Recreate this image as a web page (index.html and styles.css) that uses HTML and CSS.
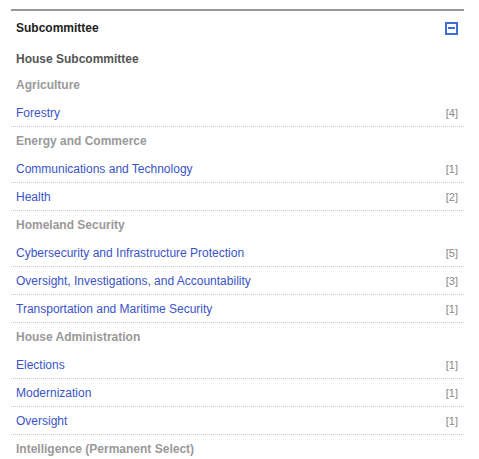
FILE: index.html
```html
<!DOCTYPE html>
<html>
<head>
<meta charset="utf-8">
<link rel="stylesheet" href="styles.css">
</head>
<body>
<div class="panel">
  <div class="panel-head">
    <span class="panel-title">Subcommittee</span>
    <span class="toggle" aria-label="collapse"></span>
  </div>
  <div class="chamber">House Subcommittee</div>
  <ul class="list">
    <li class="group">Agriculture</li>
    <li class="item"><a href="#">Forestry</a><span class="count">[4]</span></li>
    <li class="group">Energy and Commerce</li>
    <li class="item"><a href="#">Communications and Technology</a><span class="count">[1]</span></li>
    <li class="item"><a href="#">Health</a><span class="count">[2]</span></li>
    <li class="group">Homeland Security</li>
    <li class="item"><a href="#">Cybersecurity and Infrastructure Protection</a><span class="count">[5]</span></li>
    <li class="item"><a href="#">Oversight, Investigations, and Accountability</a><span class="count">[3]</span></li>
    <li class="item"><a href="#">Transportation and Maritime Security</a><span class="count">[1]</span></li>
    <li class="group">House Administration</li>
    <li class="item"><a href="#">Elections</a><span class="count">[1]</span></li>
    <li class="item"><a href="#">Modernization</a><span class="count">[1]</span></li>
    <li class="item"><a href="#">Oversight</a><span class="count">[1]</span></li>
    <li class="group">Intelligence (Permanent Select)</li>
  </ul>
</div>
</body>
</html>
```
FILE: styles.css
```css
html, body {
  margin: 0;
  padding: 0;
  background: #fff;
}
body {
  font-family: "Liberation Sans", Arial, sans-serif;
  font-size: 12px;
}
.panel {
  margin: 9px 0 0 11px;
  width: 453px;
  border-top: 2px solid #999;
}
.panel-head {
  height: 34px;
  display: flex;
  align-items: center;
  justify-content: space-between;
  padding: 0 6px 0 5px;
}
.panel-title {
  font-weight: bold;
  color: #222;
}
.toggle {
  width: 9px;
  height: 9px;
  border: 2px solid #3f6fd6;
  position: relative;
  margin-top: 1px;
}
.toggle::after {
  content: "";
  position: absolute;
  left: 1px;
  right: 1px;
  top: 3px;
  height: 2px;
  background: #3f6fd6;
}
.chamber {
  height: 23px;
  padding: 3px 0 0 5px;
  line-height: 23px;
  font-weight: bold;
  color: #555;
}
.list {
  list-style: none;
  margin: 0;
  padding: 0;
}
.group {
  height: 28px;
  line-height: 29px;
  padding-left: 5px;
  font-weight: bold;
  color: #999;
}
.item {
  height: 27px;
  display: flex;
  align-items: center;
  justify-content: space-between;
  padding: 0 6px 0 5px;
  border-bottom: 1px dotted #c8c8c8;
}
.item a {
  color: #3a53c8;
  text-decoration: none;
}
.count {
  color: #888;
  font-size: 11px;
}
```
